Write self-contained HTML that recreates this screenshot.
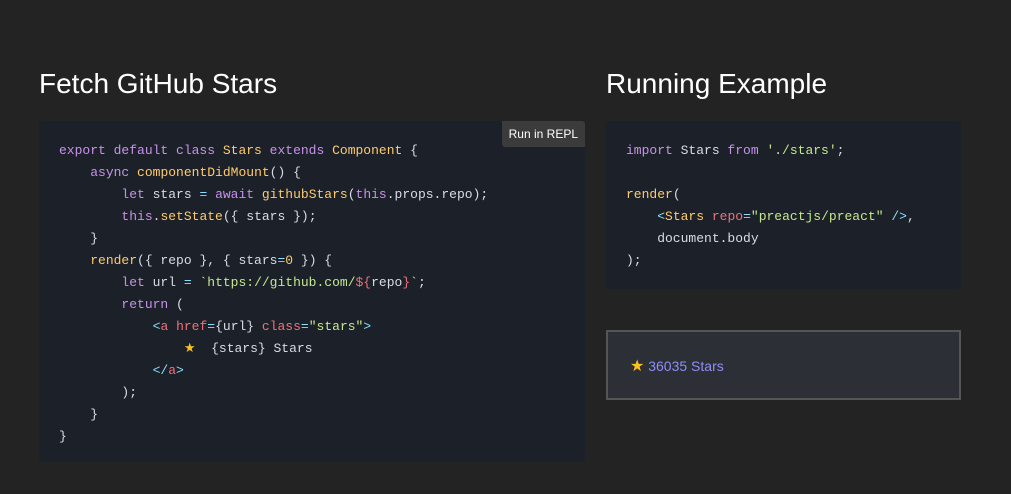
<!DOCTYPE html><html><head><style>
body{margin:0;background:#232323;width:1011px;height:494px;overflow:hidden;font-family:"Liberation Sans",sans-serif;position:relative}
h2{position:absolute;margin:0;font-weight:normal;color:#fff;font-size:28px;top:68px}
.code{position:absolute;background:#1c2028;border-radius:3px;font-family:"Liberation Mono",monospace;font-size:13px;line-height:22px;color:#d6dde6;white-space:pre;box-sizing:border-box;padding:20px}
.k{color:#c792ea}.y{color:#ffcb6b}.g{color:#c3e88d}.r{color:#f07178}.o{color:#89ddff}
.btn{position:absolute;right:0;top:0;background:#3b3b3b;color:#fff;font-family:"Liberation Sans",sans-serif;font-size:12px;padding:6px 7px;border-radius:0 3px 0 3px;line-height:14px}
.res{position:absolute;left:606px;top:330px;width:355px;height:70px;box-sizing:border-box;border:2px solid #555;background:#2c2f36;color:#8e8ef5;font-size:14px;padding:24px 0 0 22px}
</style></head><body>
<h2 style="left:39px">Fetch GitHub Stars</h2>
<h2 style="left:606px">Running Example</h2>
<div class="code" style="left:39px;top:121px;width:546px;height:341px;padding-top:19px"><div class="btn">Run in REPL</div><span class="k">export default class</span> <span class="y">Stars</span> <span class="k">extends</span> <span class="y">Component</span> {
    <span class="k">async</span> <span class="y">componentDidMount</span>() {
        <span class="k">let</span> stars <span class="o">=</span> <span class="k">await</span> <span class="y">githubStars</span>(<span class="k">this</span>.props.repo);
        <span class="k">this</span>.<span class="y">setState</span>({ stars });
    }
    <span class="y">render</span>({ repo }, { stars<span class="o">=</span><span class="y">0</span> }) {
        <span class="k">let</span> url <span class="o">=</span> <span class="g">`https://github.com/</span><span class="r">${</span>repo<span class="r">}</span><span class="g">`</span>;
        <span class="k">return</span> (
            <span class="o">&lt;</span><span class="r">a</span> <span class="r">href</span><span class="o">=</span>{url} <span class="r">class</span><span class="o">=</span><span class="g">"stars"</span><span class="o">&gt;</span>
                <span style="font-family:'DejaVu Sans';color:#fcc21b">★</span>  {stars} Stars
            <span class="o">&lt;/</span><span class="r">a</span><span class="o">&gt;</span>
        );
    }
}</div>
<div class="code" style="left:606px;top:121px;width:355px;height:168px;padding-top:19px"><span class="k">import</span> Stars <span class="k">from</span> <span class="g">'./stars'</span>;

<span class="y">render</span>(
    <span class="o">&lt;</span><span class="y">Stars</span> <span class="r">repo</span><span class="o">=</span><span class="g">"preactjs/preact"</span> <span class="o">/&gt;</span>,
    document.body
);</div>
<div class="res"><span style="font-family:'DejaVu Sans';color:#fcc21b;font-size:16px">★</span> 36035 Stars</div>
</body></html>
